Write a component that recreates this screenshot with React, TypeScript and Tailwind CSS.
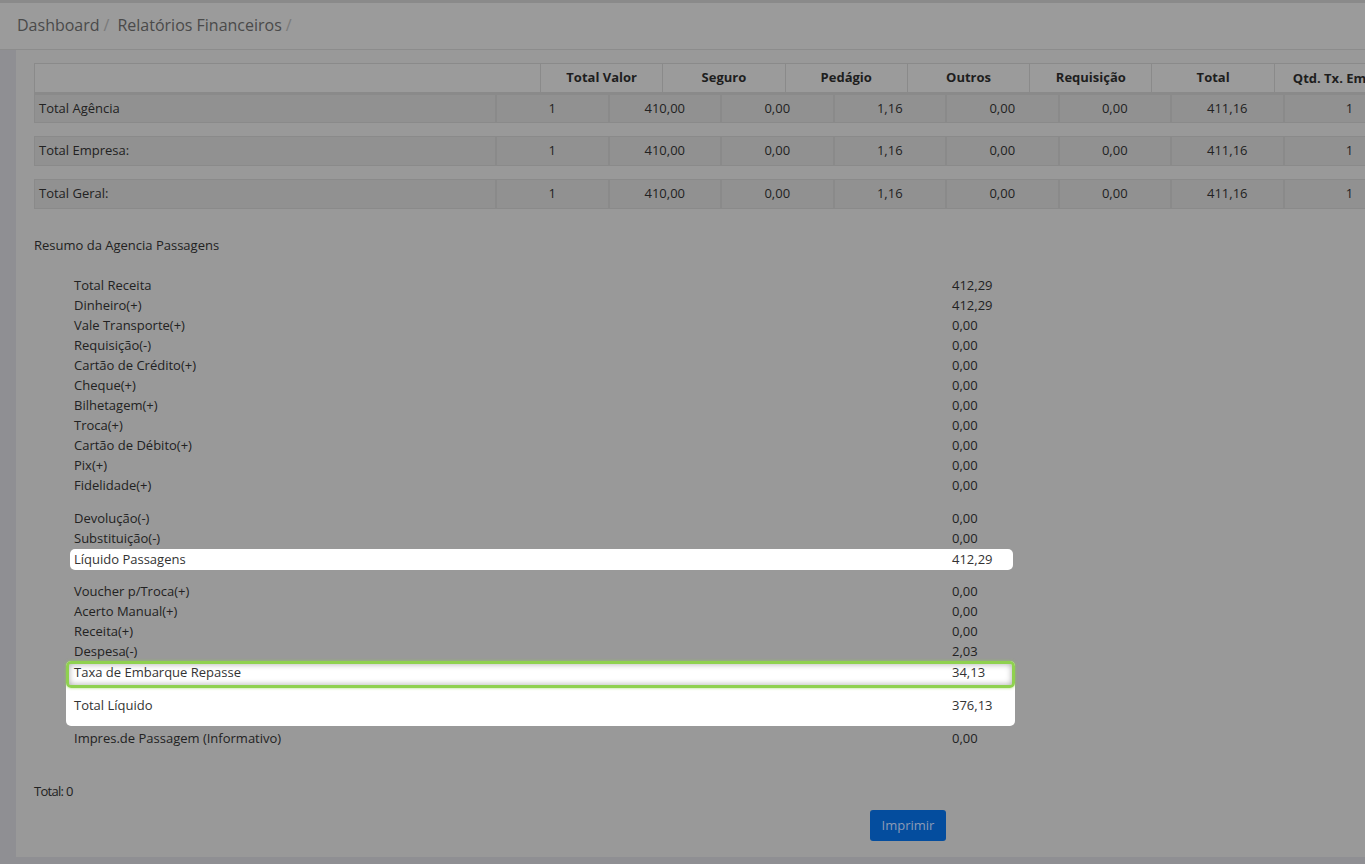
import React from "react";

const headers = ["Total Valor", "Seguro", "Pedágio", "Outros", "Requisição", "Total"];

const totalRows = ["Total Agência", "Total Empresa:", "Total Geral:"];
const rowValues = ["1", "410,00", "0,00", "1,16", "0,00", "0,00", "411,16"];

const firstBlock: [string, string][] = [
  ["Total Receita", "412,29"],
  ["Dinheiro(+)", "412,29"],
  ["Vale Transporte(+)", "0,00"],
  ["Requisição(-)", "0,00"],
  ["Cartão de Crédito(+)", "0,00"],
  ["Cheque(+)", "0,00"],
  ["Bilhetagem(+)", "0,00"],
  ["Troca(+)", "0,00"],
  ["Cartão de Débito(+)", "0,00"],
  ["Pix(+)", "0,00"],
  ["Fidelidade(+)", "0,00"],
];

const thirdBlock: [string, string][] = [
  ["Voucher p/Troca(+)", "0,00"],
  ["Acerto Manual(+)", "0,00"],
  ["Receita(+)", "0,00"],
  ["Despesa(-)", "2,03"],
];

const Line = ({ label, value }: { label: string; value: string }) => (
  <div className="flex h-[20px] items-center pl-[40px]">
    <span className="w-[878px]">{label}</span>
    <span>{value}</span>
  </div>
);

export default function App() {
  return (
    <div className="h-[864px] overflow-hidden bg-[#8f8f93] font-['Open_Sans',sans-serif] text-[13px] text-[#222]">
      <div className="h-[3px] bg-[#8a8a8a]" />
      <div className="flex h-[47px] items-center border-b border-[#8c8c8c] bg-[#9b9b9b] px-[17px] pb-[3px] text-[16px] text-[#4a4a4a]">
        <span>Dashboard</span>
        <span className="ml-[4px] mr-[8px] text-[#7a7a7a]">/</span>
        <span>Relatórios Financeiros</span>
        <span className="ml-[4px] text-[#7a7a7a]">/</span>
      </div>

      <div className="flex h-[807px]">
        <div className="w-[16px] shrink-0 bg-[#8f8f93]" />
        <div className="flex-1 overflow-hidden bg-[#999999] pl-[18px] pt-[13px]">
          {/* totals table */}
          <div className="w-[1400px]">
            <div className="flex h-[30px] border border-[#8a8a8a] bg-[#9b9b9b] font-bold text-[#1e1e1e]">
              <div className="w-[506px] shrink-0 border-r border-[#8a8a8a]" />
              {headers.map((h) => (
                <div
                  key={h}
                  className="flex w-[122.3px] shrink-0 items-center justify-center border-r border-[#8a8a8a] whitespace-nowrap"
                >
                  {h}
                </div>
              ))}
              <div className="w-[160px] shrink-0 whitespace-nowrap pl-[18px] leading-[28px]">Qtd. Tx. Embarque</div>
            </div>
            {totalRows.map((label, i) => (
              <div
                key={label}
                className={`flex h-[30px] border border-[#8a8a8a] bg-[#919191] ${i === 0 ? "border-t-2" : "mt-[13px]"}`}
              >
                <div className="flex w-[462px] shrink-0 items-center border-r-2 border-[#8a8a8a] pl-[4px]">
                  {label}
                </div>
                {rowValues.map((v, j) => (
                  <div
                    key={j}
                    className="flex w-[112.5px] shrink-0 items-center justify-center border-r-2 border-[#8a8a8a]"
                  >
                    {v}
                  </div>
                ))}
                <div className="flex w-[130px] shrink-0 items-center justify-center">1</div>
              </div>
            ))}
          </div>

          {/* summary */}
          <div className="mt-[27px] flex h-[20px] items-center">Resumo da Agencia Passagens</div>

          <div className="mt-[20px]">
            {firstBlock.map(([l, v]) => (
              <Line key={l} label={l} value={v} />
            ))}
          </div>

          <div className="mt-[13px]">
            <Line label="Devolução(-)" value="0,00" />
            <Line label="Substituição(-)" value="0,00" />
            <div className="ml-[36px] flex h-[21px] w-[943px] items-center rounded-[5px] bg-white pl-[4px] text-[#333]">
              <span className="w-[878px]">Líquido Passagens</span>
              <span>412,29</span>
            </div>
          </div>

          <div className="mt-[12px]">
            {thirdBlock.map(([l, v]) => (
              <Line key={l} label={l} value={v} />
            ))}
            <div className="ml-[32px] mt-[-1px] w-[949px] rounded-[5px] bg-white text-[#333]">
              <div className="flex h-[27px] items-center rounded-[5px] border-[3px] border-[#8fd14f] pb-[4px] pl-[5px] shadow-[inset_0_0_6px_rgba(0,0,0,0.35),0_0_3px_rgba(143,209,79,0.8)]">
                <span className="w-[878px]">Taxa de Embarque Repasse</span>
                <span>34,13</span>
              </div>
              <div className="flex h-[38px] items-center pb-[2px] pl-[8px]">
                <span className="w-[878px]">Total Líquido</span>
                <span>376,13</span>
              </div>
            </div>
            <div className="mt-[3px]">
              <Line label="Impres.de Passagem (Informativo)" value="0,00" />
            </div>
          </div>

          <div className="mt-[33px] flex h-[20px] items-center tracking-[-0.7px]">Total: 0</div>

          <div className="mt-[8px] pl-[836px]">
            <button
              type="button"
              className="h-[31px] w-[76px] rounded-[3px] bg-[#044d9e] text-[13px] text-[#8d9bb5]"
            >
              Imprimir
            </button>
          </div>
        </div>
      </div>
      <div className="h-[7px] bg-[#8f8f93]" />
    </div>
  );
}
